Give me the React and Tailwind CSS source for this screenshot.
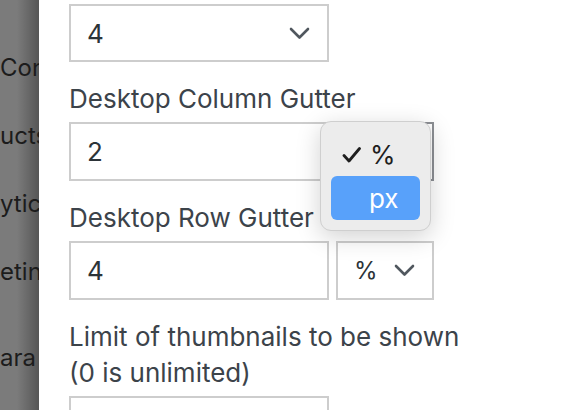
import React from "react";

const font = { fontFamily: "Inter, 'Open Sans', 'Liberation Sans', sans-serif" };

function Chevron({ className = "" }) {
  return (
    <svg className={className} width="21" height="13" viewBox="0 0 21 13" fill="none">
      <path d="M2 2 L10.5 10.5 L19 2" stroke="#50575e" strokeWidth="2.6" strokeLinecap="round" strokeLinejoin="round" />
    </svg>
  );
}

function Field({ children }) {
  return (
    <div className="flex h-[59px] w-[260px] shrink-0 items-center border-2 border-[#cdcdcd] bg-white pl-[16px] text-[26px] text-[#2c3338]">
      {children}
    </div>
  );
}

function Label({ children }) {
  return <div className="mt-[19px] mb-[5px] whitespace-nowrap text-[26px] leading-[36px] text-[#3c434a]">{children}</div>;
}

export default function App() {
  const sideItems = [
    { t: "Con", mt: "mt-[50px]" },
    { t: "ucts", mt: "mt-[32px]" },
    { t: "ytics", mt: "mt-[32px]" },
    { t: "etin", mt: "mt-[32px]" },
    { t: "ara", mt: "mt-[50px]" },
  ];
  return (
    <div className="flex h-[410px] w-[564px] overflow-hidden bg-white" style={font}>
      <div className="relative w-[39px] shrink-0 overflow-hidden bg-[#7b7b7b]">
        <div className="absolute inset-y-0 right-0 w-[22px] bg-gradient-to-r from-transparent to-black/30" />
        <div className="relative text-[24px] leading-[36px] text-[#1c1c1c]">
          {sideItems.map((s) => (
            <div key={s.t} className={`${s.mt} whitespace-nowrap`}>{s.t}</div>
          ))}
        </div>
      </div>
      <div className="block flex-1 pl-[30px]">
        <div className="mt-[4px] flex h-[58px] w-[260px] items-center justify-between border-2 border-[#cdcdcd] pl-[16px] pr-[17px] text-[26px] text-[#2c3338]">
          <span>4</span>
          <Chevron />
        </div>

        <Label>Desktop Column Gutter</Label>
        <div className="relative flex gap-[7px]">
          <Field>2</Field>
          <div className="flex h-[59px] w-[98px] shrink-0 items-center justify-end border-2 border-[#8c8f94] pr-[17px]">
            <Chevron />
          </div>
          <div className="absolute left-[251px] top-[-1px] w-[111px] rounded-[11px] border border-[#cfcfcf] bg-[#ececec] p-[10px] shadow-[0_6px_24px_rgba(0,0,0,0.18)]">
            <div className="relative flex h-[44px] items-center pl-[39px] text-[26px] text-[#1e1e1e]">
              <svg className="absolute left-[11px] top-[15px]" width="19" height="16" viewBox="0 0 19 16" fill="none">
                <path d="M2 8.5 L7 14 L17.5 1.5" stroke="#1e1e1e" strokeWidth="2.8" strokeLinecap="round" strokeLinejoin="round" />
              </svg>
              <span>%</span>
            </div>
            <div className="flex h-[44px] items-center rounded-[6px] bg-[#58a1fa] pl-[38px] text-[26px] text-white">
              px
            </div>
          </div>
        </div>

        <Label>Desktop Row Gutter</Label>
        <div className="flex gap-[7px]">
          <Field>4</Field>
          <div className="flex h-[59px] w-[98px] shrink-0 items-center justify-between border-2 border-[#cdcdcd] pl-[16px] pr-[17px] text-[24px] text-[#2c3338]">
            <span>%</span>
            <Chevron />
          </div>
        </div>

        <Label>
          Limit of thumbnails to be shown
          <br />
          (0 is unlimited)
        </Label>
        <Field>{""}</Field>
      </div>
    </div>
  );
}
